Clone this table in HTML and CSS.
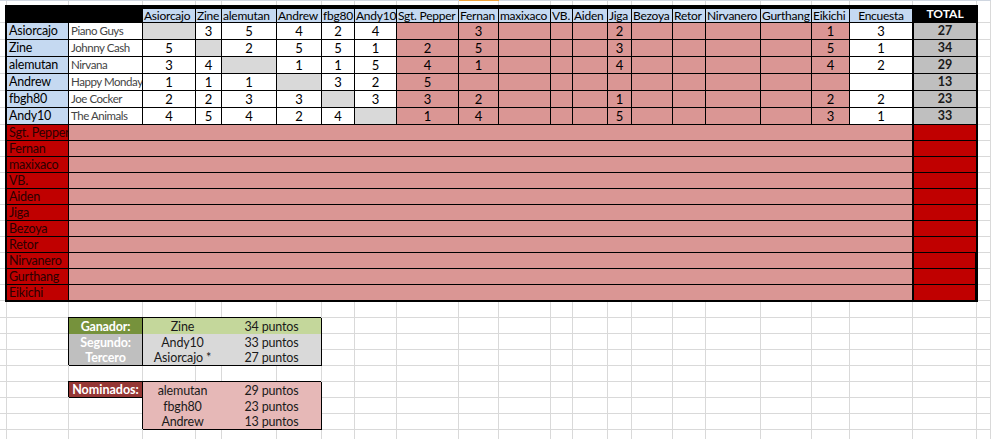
FILE: index.html
```html
<!DOCTYPE html>
<html lang="es">
<head>
<meta charset="utf-8">
<title>Votaciones</title>
<link rel="stylesheet" href="styles.css">
</head>
<body>
<div class="sheet">
  <div class="vlines"><span></span><span></span><span></span><span></span><span></span><span></span><span></span><span></span><span></span><span></span><span></span><span></span><span></span><span></span><span></span><span></span><span></span><span></span><span></span><span></span><span></span><span></span><span></span></div>
  <div class="hlines"><span></span><span></span><span></span><span></span><span></span><span></span><span></span><span></span><span></span><span></span><span></span><span></span><span></span><span></span><span></span><span></span><span></span><span></span><span></span><span></span><span></span><span></span><span></span><span></span><span></span><span></span><span></span></div>
  <div class="topline"></div>
  <div class="selmark"></div>

  <div class="table">
    <!-- header -->
    <div class="c hb"></div>
    <div class="c h">Asiorcajo</div><div class="c h">Zine</div><div class="c h">alemutan</div><div class="c h">Andrew</div><div class="c h">fbg80</div><div class="c h">Andy10</div>
    <div class="c h">Sgt. Pepper</div><div class="c h">Fernan</div><div class="c h">maxixaco</div><div class="c h">VB.</div><div class="c h">Aiden</div><div class="c h">Jiga</div><div class="c h">Bezoya</div><div class="c h">Retor</div><div class="c h">Nirvanero</div><div class="c h">Gurthang</div><div class="c h">Eikichi</div>
    <div class="c h mid">Encuesta</div><div class="c ht">TOTAL</div>

    <!-- Asiorcajo -->
    <div class="c nm">Asiorcajo</div><div class="c sg">Piano Guys</div>
    <div class="c d"></div><div class="c w">3</div><div class="c w">5</div><div class="c w">4</div><div class="c w">2</div><div class="c w">4</div>
    <div class="c p"></div><div class="c p">3</div><div class="c p"></div><div class="c p"></div><div class="c p"></div><div class="c p">2</div><div class="c p"></div><div class="c p"></div><div class="c p"></div><div class="c p"></div><div class="c p">1</div>
    <div class="c w">3</div><div class="c tt">27</div>

    <!-- Zine -->
    <div class="c nm">Zine</div><div class="c sg">Johnny Cash</div>
    <div class="c w">5</div><div class="c d"></div><div class="c w">2</div><div class="c w">5</div><div class="c w">5</div><div class="c w">1</div>
    <div class="c p">2</div><div class="c p">5</div><div class="c p"></div><div class="c p"></div><div class="c p"></div><div class="c p">3</div><div class="c p"></div><div class="c p"></div><div class="c p"></div><div class="c p"></div><div class="c p">5</div>
    <div class="c w">1</div><div class="c tt">34</div>

    <!-- alemutan -->
    <div class="c nm">alemutan</div><div class="c sg">Nirvana</div>
    <div class="c w">3</div><div class="c w">4</div><div class="c d"></div><div class="c w">1</div><div class="c w">1</div><div class="c w">5</div>
    <div class="c p">4</div><div class="c p">1</div><div class="c p"></div><div class="c p"></div><div class="c p"></div><div class="c p">4</div><div class="c p"></div><div class="c p"></div><div class="c p"></div><div class="c p"></div><div class="c p">4</div>
    <div class="c w">2</div><div class="c tt">29</div>

    <!-- Andrew -->
    <div class="c nm">Andrew</div><div class="c sg">Happy Monday</div>
    <div class="c w">1</div><div class="c w">1</div><div class="c w">1</div><div class="c d"></div><div class="c w">3</div><div class="c w">2</div>
    <div class="c p">5</div><div class="c p"></div><div class="c p"></div><div class="c p"></div><div class="c p"></div><div class="c p"></div><div class="c p"></div><div class="c p"></div><div class="c p"></div><div class="c p"></div><div class="c p"></div>
    <div class="c w"></div><div class="c tt">13</div>

    <!-- fbgh80 -->
    <div class="c nm">fbgh80</div><div class="c sg">Joe Cocker</div>
    <div class="c w">2</div><div class="c w">2</div><div class="c w">3</div><div class="c w">3</div><div class="c d"></div><div class="c w">3</div>
    <div class="c p">3</div><div class="c p">2</div><div class="c p"></div><div class="c p"></div><div class="c p"></div><div class="c p">1</div><div class="c p"></div><div class="c p"></div><div class="c p"></div><div class="c p"></div><div class="c p">2</div>
    <div class="c w">2</div><div class="c tt">23</div>

    <!-- Andy10 -->
    <div class="c nm">Andy10</div><div class="c sg">The Animals</div>
    <div class="c w">4</div><div class="c w">5</div><div class="c w">4</div><div class="c w">2</div><div class="c w">4</div><div class="c d"></div>
    <div class="c p">1</div><div class="c p">4</div><div class="c p"></div><div class="c p"></div><div class="c p"></div><div class="c p">5</div><div class="c p"></div><div class="c p"></div><div class="c p"></div><div class="c p"></div><div class="c p">3</div>
    <div class="c w">1</div><div class="c tt">33</div>

    <!-- remaining voters -->
    <div class="c rl">Sgt. Pepper</div><div class="c pm"></div><div class="c rt"></div>
    <div class="c rl">Fernan</div><div class="c pm"></div><div class="c rt"></div>
    <div class="c rl">maxixaco</div><div class="c pm"></div><div class="c rt"></div>
    <div class="c rl">VB.</div><div class="c pm"></div><div class="c rt"></div>
    <div class="c rl">Aiden</div><div class="c pm"></div><div class="c rt"></div>
    <div class="c rl">Jiga</div><div class="c pm"></div><div class="c rt"></div>
    <div class="c rl">Bezoya</div><div class="c pm"></div><div class="c rt"></div>
    <div class="c rl">Retor</div><div class="c pm"></div><div class="c rt"></div>
    <div class="c rl">Nirvanero</div><div class="c pm"></div><div class="c rt wide"></div>
    <div class="c rl">Gurthang</div><div class="c pm"></div><div class="c rt wide"></div>
    <div class="c rl">Eikichi</div><div class="c pm"></div><div class="c rt wide"></div>
  </div>

  <div class="podium">
    <div class="lab win">Ganador:</div><div class="val win">Zine</div><div class="val win">34 puntos</div>
    <div class="lab sec">Segundo:</div><div class="val sec">Andy10</div><div class="val sec">33 puntos</div>
    <div class="lab sec">Tercero</div><div class="val sec">Asiorcajo *</div><div class="val sec">27 puntos</div>
  </div>

  <div class="nomlabel">Nominados:</div>
  <div class="nominees">
    <div>alemutan</div><div>29 puntos</div>
    <div>fbgh80</div><div>23 puntos</div>
    <div>Andrew</div><div>13 puntos</div>
  </div>
</div>
</body>
</html>
```

FILE: styles.css
```css
* {
  box-sizing: border-box;
  margin: 0;
  padding: 0;
}

html,
body {
  width: 991px;
  height: 439px;
  overflow: hidden;
  background: #ffffff;
}

body {
  font-family: Lato, "Liberation Sans", sans-serif;
  font-size: 13px;
  color: #000000;
}

.sheet {
  display: grid;
  width: 991px;
  height: 439px;
  grid-template-columns: 7px 62px 74px 53px 26px 55px 45px 33px 42px 62px 40px 52px 22px 35px 24px 41px 33px 55px 51px 38px 63px 64px 1fr;
  grid-template-rows: 5px 18px repeat(6, 17px) repeat(11, 16px) 17px repeat(7, 16px) 1fr;
}

/* spreadsheet gridlines */
.vlines,
.hlines {
  grid-column: 1 / -1;
  grid-row: 1 / -1;
  display: grid;
  grid-template-columns: subgrid;
  grid-template-rows: subgrid;
}

.vlines span {
  grid-row: 1 / -1;
  border-right: 1px solid #d9d9d9;
}

.hlines span {
  grid-column: 1 / -1;
  border-bottom: 1px solid #d9d9d9;
}

.hlines span:first-child {
  border-bottom-color: transparent;
}

.topline {
  grid-column: 1 / -1;
  grid-row: 1;
  height: 1px;
  background: #cfd6e0;
}

.selmark {
  grid-column: 11;
  grid-row: 1;
  height: 1px;
  background: #f0a23a;
}

/* main table */
.table {
  grid-column: 2 / 23;
  grid-row: 2 / 20;
  display: grid;
  grid-template-columns: subgrid;
  grid-template-rows: subgrid;
  box-shadow: -2px 0 0 #000, 1px 0 0 #000, -2px 1px 0 #000, 1px 1px 0 #000;
}

.c {
  border-right: 1px solid #000;
  border-bottom: 1px solid #000;
  display: flex;
  align-items: center;
  justify-content: center;
  white-space: nowrap;
  overflow-x: clip;
  line-height: 14px;
  min-width: 0;
}

.hb {
  grid-column: span 2;
  background: #000;
}

.h {
  background: #c5d9f1;
  border-top: 4px solid #000;
  justify-content: flex-start;
  padding-left: 1px;
  line-height: 13px;
  font-size: 12px;
  letter-spacing: -0.25px;
}

.h.mid {
  justify-content: center;
  padding-left: 0;
}

.ht {
  background: #000;
  color: #ffffff;
  font-weight: 700;
  font-size: 12px;
  border-left: 1px solid #000;
}

.nm {
  background: #c5d9f1;
  justify-content: flex-start;
  padding-left: 2px;
  font-size: 12.5px;
  letter-spacing: -0.2px;
}

.sg {
  background: #ffffff;
  justify-content: flex-start;
  padding-left: 2px;
  font-size: 11.5px;
  letter-spacing: -0.45px;
  color: #444444;
}

.w {
  background: #ffffff;
}

.d {
  background: #d9d9d9;
}

.p {
  background: #da9694;
}

.tt {
  background: #bfbfbf;
  font-weight: 700;
  font-size: 12.5px;
  color: #1a1a1a;
  border-left: 1px solid #000;
}

.rl {
  background: #c00000;
  color: #2a0000;
  justify-content: flex-start;
  padding-left: 2px;
  font-size: 12.5px;
  letter-spacing: -0.2px;
}

.pm {
  grid-column: span 19;
  background: #da9694;
}

.rt {
  background: #c00000;
  border-left: 1px solid #000;
}

.rt.wide {
  border-right-width: 2px;
}

/* podium block */
.podium {
  grid-column: 3 / 8;
  grid-row: 21 / 24;
  display: grid;
  grid-template-columns: 74px 79px 1fr;
  grid-template-rows: 16px 16px 1fr;
  border-right: 1px solid #000;
  border-bottom: 1px solid #000;
  box-shadow: -1px -1px 0 #000;
  font-size: 12.5px;
  letter-spacing: -0.15px;
}

.podium > div {
  display: flex;
  align-items: center;
  justify-content: center;
  white-space: nowrap;
  color: #1a1a1a;
}

.podium .lab {
  border-right: 1px solid #000;
  color: #ffffff;
  font-weight: 700;
}

.lab.win {
  background: #76923c;
}

.lab.sec {
  background: #bfbfbf;
}

.val.win {
  background: #c4d79b;
}

.val.sec {
  background: #d9d9d9;
}

/* nominees block */
.nomlabel {
  grid-column: 3;
  grid-row: 25;
  background: #953735;
  color: #ffffff;
  font-weight: 700;
  font-size: 12.5px;
  border-right: 1px solid #000;
  border-bottom: 1px solid #000;
  box-shadow: -1px -1px 0 #000;
  display: flex;
  align-items: center;
  justify-content: center;
  white-space: nowrap;
}

.nominees {
  grid-column: 4 / 8;
  grid-row: 25 / 28;
  background: #e6b8b7;
  display: grid;
  grid-template-columns: 79px 1fr;
  grid-template-rows: 16px 16px 1fr;
  border-right: 1px solid #000;
  border-bottom: 1px solid #000;
  box-shadow: -1px -1px 0 #000;
  font-size: 12.5px;
  letter-spacing: -0.15px;
}

.nominees > div {
  display: flex;
  align-items: center;
  justify-content: center;
  white-space: nowrap;
  color: #1a1a1a;
}
```
